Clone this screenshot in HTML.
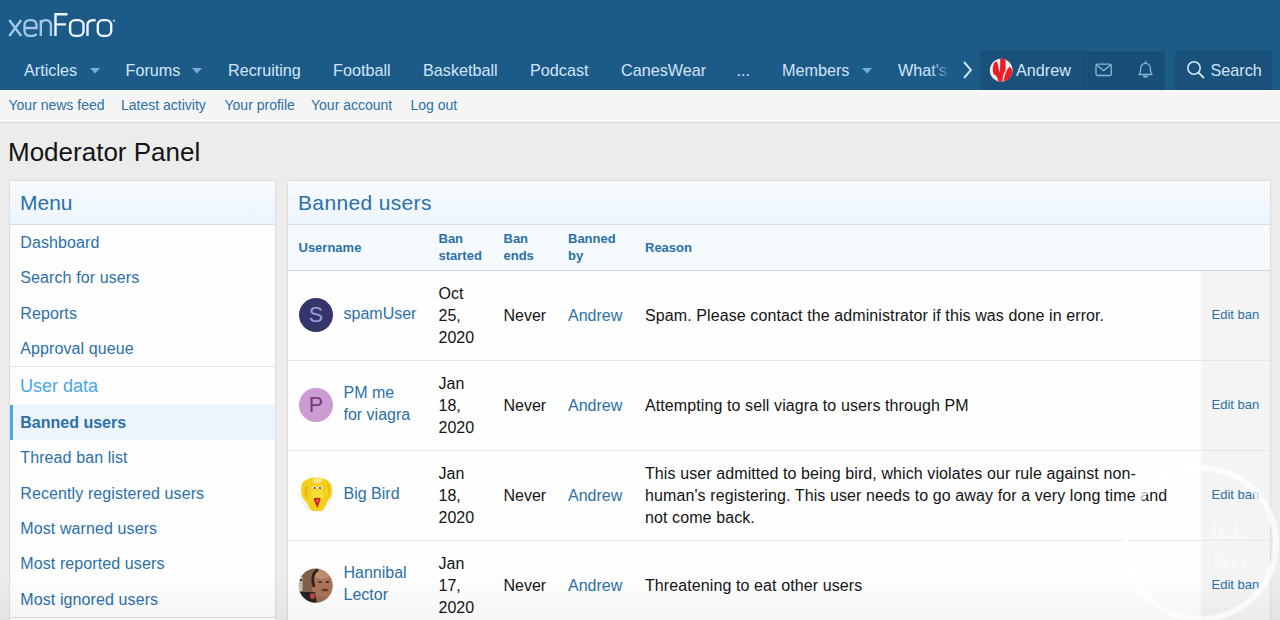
<!DOCTYPE html>
<html><head><meta charset="utf-8"><style>
html,body{margin:0;padding:0}
body{width:1280px;height:620px;overflow:hidden;position:relative;background:#ececec;font-family:"Liberation Sans", sans-serif}
.t{position:absolute;white-space:nowrap}
.r{position:absolute;box-sizing:border-box}
</style></head><body>
<div class="r" style="left:0px;top:0px;width:1280px;height:90px;background:#1c5a88"></div>
<svg class="r" style="left:0;top:0" width="130" height="45" viewBox="0 0 130 45">
<g fill="none" stroke-width="2.4" stroke-linecap="butt">
<g stroke="#a2c8e8">
<path d="M9.3 20 L21.2 36 M21.2 20 L9.3 36"/>
<path d="M24.5 28 H36.5 V25.5 C36.5 22 34.5 20.1 31 20.1 H30 C26.5 20.1 24.5 22 24.5 25.5 V30.5 C24.5 34 26.5 35.9 30 35.9 H31.5 C34 35.9 35.5 35.2 36.4 33.8"/>
<path d="M40.8 36 V20 M40.8 25.5 C40.8 22 42.8 20.1 46 20.1 C49.2 20.1 50.9 22 50.9 25.5 V36"/>
</g>
<g stroke="#eef5fb">
<path d="M55.5 36 V14.2 H67.5 M55.5 24.4 H66"/>
<rect x="70.1" y="20.1" width="13.4" height="15.8" rx="5"/>
<path d="M87.5 36 V25.5 C87.5 22 89.5 20.2 92.8 20.2 H95.6"/>
<rect x="97.8" y="20.1" width="13.4" height="15.8" rx="5"/>
</g></g>
<circle cx="114" cy="20.8" r="1.3" fill="#8fb4d4"/>
</svg>
<div class="t" style="left:24px;top:61px;font-size:16.2px;line-height:18px;color:#d0e6f8;font-weight:400;">Articles</div>
<div class="t" style="left:125.5px;top:61px;font-size:16.2px;line-height:18px;color:#d0e6f8;font-weight:400;">Forums</div>
<div class="t" style="left:228px;top:61px;font-size:16.2px;line-height:18px;color:#d0e6f8;font-weight:400;">Recruiting</div>
<div class="t" style="left:333px;top:61px;font-size:16.2px;line-height:18px;color:#d0e6f8;font-weight:400;">Football</div>
<div class="t" style="left:423px;top:61px;font-size:16.2px;line-height:18px;color:#d0e6f8;font-weight:400;">Basketball</div>
<div class="t" style="left:530px;top:61px;font-size:16.2px;line-height:18px;color:#d0e6f8;font-weight:400;">Podcast</div>
<div class="t" style="left:621px;top:61px;font-size:16.2px;line-height:18px;color:#d0e6f8;font-weight:400;">CanesWear</div>
<div class="t" style="left:736.5px;top:61px;font-size:16.2px;line-height:18px;color:#d0e6f8;font-weight:400;">...</div>
<div class="t" style="left:782px;top:61px;font-size:16.2px;line-height:18px;color:#d0e6f8;font-weight:400;">Members</div>
<div class="t" style="left:898px;top:61px;font-size:16.2px;line-height:18px;color:#d0e6f8;font-weight:400;">What's</div>
<svg class="r" style="left:89.7px;top:68px" width="10" height="6"><path d="M0 0 H10 L5 5.5 Z" fill="#7eadd3"/></svg>
<svg class="r" style="left:192.2px;top:68px" width="10" height="6"><path d="M0 0 H10 L5 5.5 Z" fill="#7eadd3"/></svg>
<svg class="r" style="left:861.5px;top:68px" width="10" height="6"><path d="M0 0 H10 L5 5.5 Z" fill="#7eadd3"/></svg>
<div class="r" style="left:930px;top:55px;width:22px;height:30px;background:linear-gradient(to right, rgba(28,90,136,0), #1c5a88)"></div>
<svg class="r" style="left:961px;top:60px" width="14" height="20"><path d="M3 2 L10 10 L3 18" fill="none" stroke="#d0e6f8" stroke-width="1.9"/></svg>
<div class="r" style="left:980px;top:51px;width:185px;height:39px;background:rgba(0,0,0,0.09)"></div>
<div class="r" style="left:1083px;top:51px;width:82px;height:39px;background:rgba(0,0,0,0.02)"></div>
<div class="r" style="left:1175px;top:51px;width:97px;height:39px;background:rgba(0,0,0,0.09)"></div>
<svg class="r" style="left:988px;top:57px" width="26" height="26" viewBox="0 0 26 26">
<defs><clipPath id="ca"><circle cx="13.2" cy="13.2" r="11.4"/></clipPath></defs>
<circle cx="13.2" cy="13.2" r="11.4" fill="#f5eef0"/>
<g clip-path="url(#ca)">
<path d="M8.6 4.3 L9.6 6.3 C10.2 9 10.6 12 11.5 16 C12 13 12.2 10 12.2 6.3 L12.2 0 L17.6 0 L17.6 12.6 C17 15 15.5 17 15.1 18.9 L14.3 26 L11 26 C10 23 9.5 20.5 8.4 18.9 C6.5 18 5.5 17 5.2 16 C4.5 13 4.6 10 5.9 6.3 Z" fill="#ee1c25"/>
<path d="M21.8 9.6 C23 11 24.2 12 24.5 14 L24 19 C22.5 22 20 24 17 26 L15.5 26 C15.8 22 16.3 20 16.8 18.9 C17.5 16 18.5 14 19.3 12.6 Z" fill="#ee1c25"/>
</g>
</svg>
<div class="t" style="left:1016px;top:61px;font-size:16.2px;line-height:18px;color:#d0e6f8;font-weight:400;">Andrew</div>
<svg class="r" style="left:1095px;top:63px" width="18" height="14"><rect x="1" y="1.2" width="15.3" height="11.3" rx="1.6" fill="none" stroke="#8db3d3" stroke-width="1.3"/><path d="M1.6 2 L8.65 7.6 L15.7 2" fill="none" stroke="#8db3d3" stroke-width="1.3"/></svg>
<svg class="r" style="left:1137px;top:60px" width="18" height="20"><path d="M2 14.5 C3.5 13 3.7 11 3.7 8.5 C3.7 5.5 5.8 3.3 8.5 3.3 C11.2 3.3 13.3 5.5 13.3 8.5 C13.3 11 13.5 13 15 14.5 Z" fill="none" stroke="#8db3d3" stroke-width="1.3" stroke-linejoin="round"/><path d="M8.5 1 V3" stroke="#8db3d3" stroke-width="1.3"/><path d="M7 16.5 H10" stroke="#8db3d3" stroke-width="1.8" stroke-linecap="round"/></svg>
<svg class="r" style="left:1186px;top:60px" width="20" height="20"><circle cx="8" cy="8" r="6.2" fill="none" stroke="#d0e6f8" stroke-width="1.6"/><path d="M12.6 12.6 L17.5 17.5" stroke="#d0e6f8" stroke-width="1.8" stroke-linecap="round"/></svg>
<div class="t" style="left:1210.5px;top:61px;font-size:16.2px;line-height:18px;color:#d0e6f8;font-weight:400;">Search</div>
<div class="r" style="left:0px;top:90px;width:1280px;height:33px;background:#f5f5f5;border-bottom:1px solid #d6d6d6"></div>
<div class="r" style="left:0px;top:90px;width:1280px;height:1px;background:#fcfcfc"></div>
<div class="t" style="left:8.5px;top:97px;font-size:14px;line-height:16px;color:#2b70a8;font-weight:400;">Your news feed</div>
<div class="t" style="left:121px;top:97px;font-size:14px;line-height:16px;color:#2b70a8;font-weight:400;">Latest activity</div>
<div class="t" style="left:224.5px;top:97px;font-size:14px;line-height:16px;color:#2b70a8;font-weight:400;">Your profile</div>
<div class="t" style="left:311px;top:97px;font-size:14px;line-height:16px;color:#2b70a8;font-weight:400;">Your account</div>
<div class="t" style="left:410.5px;top:97px;font-size:14px;line-height:16px;color:#2b70a8;font-weight:400;">Log out</div>
<div class="t" style="left:8px;top:137px;font-size:26px;line-height:30px;color:#141414;font-weight:400;">Moderator Panel</div>
<div class="r" style="left:9px;top:180px;width:267px;height:460px;background:#fefefe;border:1px solid #dcdcdc;border-radius:3px"></div>
<div class="r" style="left:10px;top:181px;width:265px;height:44px;background:linear-gradient(to bottom,#f6fbff,#edf5fc);border-bottom:1px solid #dcdcdc;border-radius:3px 3px 0 0"></div>
<div class="t" style="left:20px;top:191px;font-size:21px;line-height:23px;color:#2b70a8;font-weight:400;">Menu</div>
<div class="t" style="left:20.3px;top:234px;font-size:16px;line-height:17px;color:#2b70a8;font-weight:400;letter-spacing:0.1px">Dashboard</div>
<div class="t" style="left:20.3px;top:269px;font-size:16px;line-height:17px;color:#2b70a8;font-weight:400;letter-spacing:0.1px">Search for users</div>
<div class="t" style="left:20.3px;top:305px;font-size:16px;line-height:17px;color:#2b70a8;font-weight:400;letter-spacing:0.1px">Reports</div>
<div class="t" style="left:20.3px;top:340px;font-size:16px;line-height:17px;color:#2b70a8;font-weight:400;letter-spacing:0.1px">Approval queue</div>
<div class="r" style="left:10px;top:366px;width:265px;height:1px;background:#e2e2e2"></div>
<div class="t" style="left:20px;top:376px;font-size:18px;line-height:20px;color:#47a7eb;font-weight:400;">User data</div>
<div class="r" style="left:10px;top:405px;width:265px;height:35px;background:#edf5fc"></div>
<div class="r" style="left:10px;top:405px;width:3px;height:35px;background:#47a7eb"></div>
<div class="t" style="left:20.3px;top:414px;font-size:16px;line-height:17px;color:#2b70a8;font-weight:700;">Banned users</div>
<div class="t" style="left:20.3px;top:449px;font-size:16px;line-height:17px;color:#2b70a8;font-weight:400;letter-spacing:0.1px">Thread ban list</div>
<div class="t" style="left:20.3px;top:485px;font-size:16px;line-height:17px;color:#2b70a8;font-weight:400;letter-spacing:0.1px">Recently registered users</div>
<div class="t" style="left:20.3px;top:520px;font-size:16px;line-height:17px;color:#2b70a8;font-weight:400;letter-spacing:0.1px">Most warned users</div>
<div class="t" style="left:20.3px;top:555px;font-size:16px;line-height:17px;color:#2b70a8;font-weight:400;letter-spacing:0.1px">Most reported users</div>
<div class="t" style="left:20.3px;top:591px;font-size:16px;line-height:17px;color:#2b70a8;font-weight:400;letter-spacing:0.1px">Most ignored users</div>
<div class="r" style="left:10px;top:617px;width:265px;height:1px;background:#e2e2e2"></div>
<div class="r" style="left:287px;top:180px;width:984px;height:460px;background:#fefefe;border:1px solid #dcdcdc;border-radius:3px"></div>
<div class="r" style="left:288px;top:181px;width:982px;height:44px;background:linear-gradient(to bottom,#f6fbff,#edf5fc);border-bottom:1px solid #dcdcdc;border-radius:3px 3px 0 0"></div>
<div class="t" style="left:298px;top:191px;font-size:21px;line-height:23px;color:#2b70a8;font-weight:400;letter-spacing:0.35px">Banned users</div>
<div class="r" style="left:288px;top:225px;width:982px;height:46px;background:#f5faff;border-bottom:1px solid #d4d4d4"></div>
<div class="t" style="left:298.5px;top:240px;font-size:13px;line-height:15px;color:#2b70a8;font-weight:700;">Username</div>
<div class="t" style="left:438.5px;top:231px;font-size:13px;line-height:15px;color:#2b70a8;font-weight:700;">Ban</div>
<div class="t" style="left:438.5px;top:248px;font-size:13px;line-height:15px;color:#2b70a8;font-weight:700;">started</div>
<div class="t" style="left:503.5px;top:231px;font-size:13px;line-height:15px;color:#2b70a8;font-weight:700;">Ban</div>
<div class="t" style="left:503.5px;top:248px;font-size:13px;line-height:15px;color:#2b70a8;font-weight:700;">ends</div>
<div class="t" style="left:568px;top:231px;font-size:13px;line-height:15px;color:#2b70a8;font-weight:700;">Banned</div>
<div class="t" style="left:568px;top:248px;font-size:13px;line-height:15px;color:#2b70a8;font-weight:700;">by</div>
<div class="t" style="left:645px;top:240px;font-size:13px;line-height:15px;color:#2b70a8;font-weight:700;">Reason</div>
<div class="r" style="left:1201px;top:271px;width:69px;height:400px;background:#f4f4f4"></div>
<div class="r" style="left:288px;top:360px;width:982px;height:1px;background:#e6e6e6"></div>
<div class="r" style="left:288px;top:450px;width:982px;height:1px;background:#e6e6e6"></div>
<div class="r" style="left:288px;top:540px;width:982px;height:1px;background:#e6e6e6"></div>
<div class="r" style="left:298.8px;top:298.3px;width:34px;height:34px;border-radius:50%;background:#33356b;color:#9c9edb;font-size:21.5px;line-height:35px;text-align:center">S</div>
<div class="t" style="left:343.5px;top:305px;font-size:16px;line-height:17px;color:#2b70a8;font-weight:400;">spamUser</div>
<div class="t" style="left:438.5px;top:285px;font-size:16px;line-height:17px;color:#141414;font-weight:400;">Oct</div>
<div class="t" style="left:438.5px;top:307px;font-size:16px;line-height:17px;color:#141414;font-weight:400;">25,</div>
<div class="t" style="left:438.5px;top:329px;font-size:16px;line-height:17px;color:#141414;font-weight:400;">2020</div>
<div class="t" style="left:503.5px;top:307px;font-size:16px;line-height:17px;color:#141414;font-weight:400;">Never</div>
<div class="t" style="left:568px;top:307px;font-size:16px;line-height:17px;color:#2b70a8;font-weight:400;">Andrew</div>
<div class="t" style="left:645px;top:307px;font-size:16px;line-height:17px;color:#141414;font-weight:400;letter-spacing:0.1px">Spam. Please contact the administrator if this was done in error.</div>
<div class="t" style="left:1211.5px;top:307px;font-size:13px;line-height:15px;color:#2b70a8;font-weight:400;">Edit ban</div>
<div class="r" style="left:298.8px;top:388.3px;width:34px;height:34px;border-radius:50%;background:#cb9bd1;color:#74407b;font-size:21.5px;line-height:35px;text-align:center">P</div>
<div class="t" style="left:343.5px;top:384px;font-size:16px;line-height:17px;color:#2b70a8;font-weight:400;">PM me</div>
<div class="t" style="left:343.5px;top:406px;font-size:16px;line-height:17px;color:#2b70a8;font-weight:400;">for viagra</div>
<div class="t" style="left:438.5px;top:375px;font-size:16px;line-height:17px;color:#141414;font-weight:400;">Jan</div>
<div class="t" style="left:438.5px;top:397px;font-size:16px;line-height:17px;color:#141414;font-weight:400;">18,</div>
<div class="t" style="left:438.5px;top:419px;font-size:16px;line-height:17px;color:#141414;font-weight:400;">2020</div>
<div class="t" style="left:503.5px;top:397px;font-size:16px;line-height:17px;color:#141414;font-weight:400;">Never</div>
<div class="t" style="left:568px;top:397px;font-size:16px;line-height:17px;color:#2b70a8;font-weight:400;">Andrew</div>
<div class="t" style="left:645px;top:397px;font-size:16px;line-height:17px;color:#141414;font-weight:400;letter-spacing:0.1px">Attempting to sell viagra to users through PM</div>
<div class="t" style="left:1211.5px;top:397px;font-size:13px;line-height:15px;color:#2b70a8;font-weight:400;">Edit ban</div>
<svg class="r" style="left:296px;top:475px" width="40" height="40" viewBox="0 0 40 40">
<circle cx="20" cy="19.5" r="17" fill="#f3f2ee"/>
<path d="M5.5 12 C5 5 14 2 22 2.5 C30 3 36 7 36 14 C36.5 20 34 24 31 27 C29.5 31 28 34 26 36 L16 36 C13.5 33.5 12 30 10.5 27 C6 24 4.5 18 5.5 12 Z" fill="#f4d01a"/>
<path d="M9 12 C8 17 9 22 12 25 C11 20 11 15 12 10 Z" fill="#e9bb12"/>
<path d="M30 9 C33 13 33 19 31 24 C34 20 35 14 33 10 Z" fill="#e9bb12"/>
<ellipse cx="21.5" cy="5.5" rx="5" ry="2.8" fill="#f8e38a"/>
<ellipse cx="21.3" cy="19.5" rx="6.5" ry="5" fill="#f7dc35"/>
<ellipse cx="18.4" cy="12.8" rx="2.3" ry="1.8" fill="#f4f1e6"/>
<ellipse cx="24.2" cy="12.8" rx="2.3" ry="1.8" fill="#f4f1e6"/>
<circle cx="18.6" cy="13" r="1" fill="#3a3220"/>
<circle cx="24" cy="13" r="1" fill="#3a3220"/>
<path d="M17.5 23.5 Q21 22 24.8 23.5 L21.3 33 Z" fill="#d3141c"/>
<path d="M19.5 24.5 Q21 24 23 24.5 L21.3 28 Z" fill="#e86a80"/>
</svg>
<div class="t" style="left:343.5px;top:485px;font-size:16px;line-height:17px;color:#2b70a8;font-weight:400;">Big Bird</div>
<div class="t" style="left:438.5px;top:465px;font-size:16px;line-height:17px;color:#141414;font-weight:400;">Jan</div>
<div class="t" style="left:438.5px;top:487px;font-size:16px;line-height:17px;color:#141414;font-weight:400;">18,</div>
<div class="t" style="left:438.5px;top:509px;font-size:16px;line-height:17px;color:#141414;font-weight:400;">2020</div>
<div class="t" style="left:503.5px;top:487px;font-size:16px;line-height:17px;color:#141414;font-weight:400;">Never</div>
<div class="t" style="left:568px;top:487px;font-size:16px;line-height:17px;color:#2b70a8;font-weight:400;">Andrew</div>
<div class="t" style="left:645px;top:465px;font-size:16px;line-height:17px;color:#141414;font-weight:400;letter-spacing:0.1px">This user admitted to being bird, which violates our rule against non-</div>
<div class="t" style="left:645px;top:487px;font-size:16px;line-height:17px;color:#141414;font-weight:400;letter-spacing:0.1px">human's registering. This user needs to go away for a very long time and</div>
<div class="t" style="left:645px;top:509px;font-size:16px;line-height:17px;color:#141414;font-weight:400;letter-spacing:0.1px">not come back.</div>
<div class="t" style="left:1211.5px;top:487px;font-size:13px;line-height:15px;color:#2b70a8;font-weight:400;">Edit ban</div>
<svg class="r" style="left:296px;top:565px" width="40" height="40" viewBox="0 0 40 40">
<defs><clipPath id="ch"><circle cx="19.7" cy="20.6" r="17.1"/></clipPath><filter id="bl" x="-10%" y="-10%" width="120%" height="120%"><feGaussianBlur stdDeviation="0.45"/></filter></defs>
<g clip-path="url(#ch)"><g filter="url(#bl)"><rect width="40" height="40" fill="#80604a"/>
<rect x="2" y="12" width="4.5" height="14" fill="#c6bdb2"/>
<rect x="4" y="14" width="2" height="2" fill="#333"/>
<ellipse cx="27" cy="21" rx="11" ry="16" fill="#aa735a"/>
<ellipse cx="26" cy="9" rx="8" ry="5" fill="#c08c70"/>
<path d="M22 4.5 C18 7 16.5 11 16.8 15 C17 18 17.5 20 18 22" fill="none" stroke="#2e211a" stroke-width="2.8"/>
<ellipse cx="24" cy="17" rx="2" ry="1" fill="#4a2c22"/>
<ellipse cx="31.5" cy="17" rx="2" ry="1" fill="#4a2c22"/>
<ellipse cx="29" cy="25" rx="3.5" ry="1.3" fill="#5e3a2c"/>
<path d="M0 27 L19 27 L21 40 L0 40 Z" fill="#2b201b"/>
<ellipse cx="16.5" cy="31" rx="2.6" ry="3" fill="#b04a4a"/>
<path d="M21 31 C25 33 31 33 36 30 L40 40 L21 40 Z" fill="#9a6a50"/>
</g></g></svg>
<div class="t" style="left:343.5px;top:564px;font-size:16px;line-height:17px;color:#2b70a8;font-weight:400;">Hannibal</div>
<div class="t" style="left:343.5px;top:586px;font-size:16px;line-height:17px;color:#2b70a8;font-weight:400;">Lector</div>
<div class="t" style="left:438.5px;top:555px;font-size:16px;line-height:17px;color:#141414;font-weight:400;">Jan</div>
<div class="t" style="left:438.5px;top:577px;font-size:16px;line-height:17px;color:#141414;font-weight:400;">17,</div>
<div class="t" style="left:438.5px;top:599px;font-size:16px;line-height:17px;color:#141414;font-weight:400;">2020</div>
<div class="t" style="left:503.5px;top:577px;font-size:16px;line-height:17px;color:#141414;font-weight:400;">Never</div>
<div class="t" style="left:568px;top:577px;font-size:16px;line-height:17px;color:#2b70a8;font-weight:400;">Andrew</div>
<div class="t" style="left:645px;top:577px;font-size:16px;line-height:17px;color:#141414;font-weight:400;letter-spacing:0.1px">Threatening to eat other users</div>
<div class="t" style="left:1211.5px;top:577px;font-size:13px;line-height:15px;color:#2b70a8;font-weight:400;">Edit ban</div>
<div class="r" style="left:0px;top:575px;width:1280px;height:45px;background:linear-gradient(to bottom,rgba(0,0,0,0),rgba(0,0,0,0.035))"></div>
<div class="r" style="left:1122px;top:465px;width:157px;height:157px;border-radius:50%;border:6px solid rgba(255,255,255,0.7)"></div>
<div class="t" style="left:1211px;top:520px;font-size:22px;line-height:22px;font-weight:700;letter-spacing:1px;color:rgba(255,255,255,0.45)">ILL</div>
<div class="t" style="left:1214px;top:552px;font-size:22px;line-height:22px;font-weight:700;letter-spacing:1px;color:rgba(255,255,255,0.45)">RO</div>
</body></html>
